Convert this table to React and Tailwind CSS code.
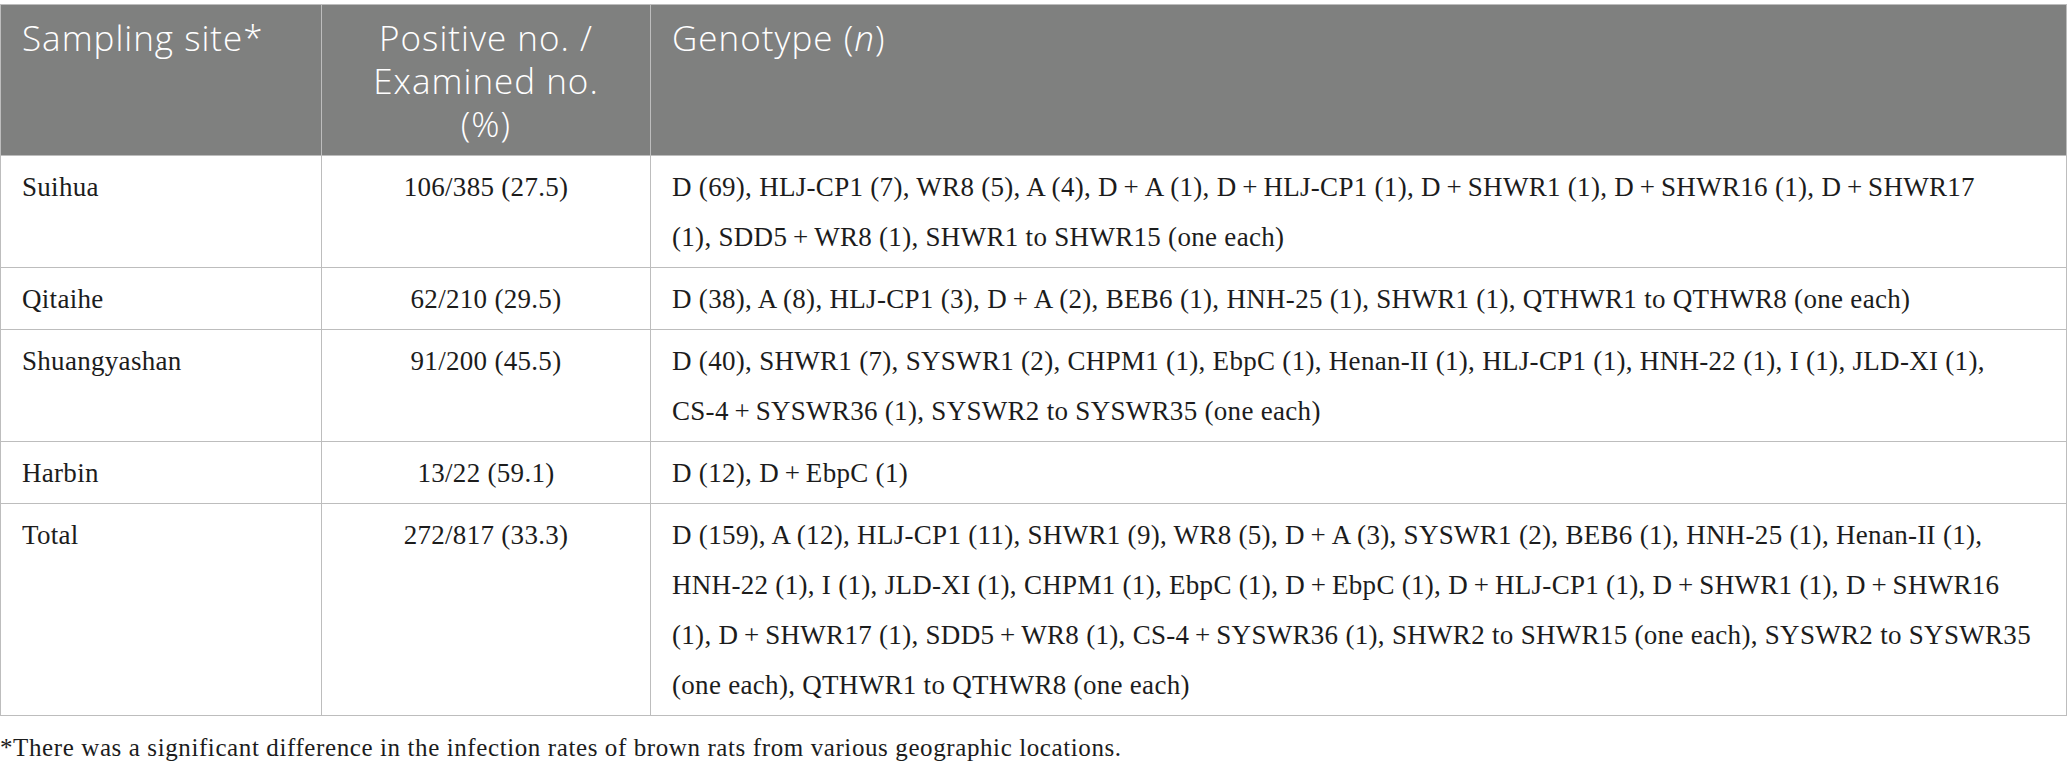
import React from "react";

// genotype lists, broken where the printed table breaks them
const rows = [
  {
    site: "Suihua",
    ratio: "106/385 (27.5)",
    genotype: [
      "D (69), HLJ-CP1 (7), WR8 (5), A (4), D + A (1), D + HLJ-CP1 (1), D + SHWR1 (1), D + SHWR16 (1), D + SHWR17",
      "(1), SDD5 + WR8 (1), SHWR1 to SHWR15 (one each)",
    ],
  },
  {
    site: "Qitaihe",
    ratio: "62/210 (29.5)",
    genotype: [
      "D (38), A (8), HLJ-CP1 (3), D + A (2), BEB6 (1), HNH-25 (1), SHWR1 (1), QTHWR1 to QTHWR8 (one each)",
    ],
  },
  {
    site: "Shuangyashan",
    ratio: "91/200 (45.5)",
    genotype: [
      "D (40), SHWR1 (7), SYSWR1 (2), CHPM1 (1), EbpC (1), Henan-II (1), HLJ-CP1 (1), HNH-22 (1), I (1), JLD-XI (1),",
      "CS-4 + SYSWR36 (1), SYSWR2 to SYSWR35 (one each)",
    ],
  },
  {
    site: "Harbin",
    ratio: "13/22 (59.1)",
    genotype: ["D (12), D + EbpC (1)"],
  },
  {
    site: "Total",
    ratio: "272/817 (33.3)",
    genotype: [
      "D (159), A (12), HLJ-CP1 (11), SHWR1 (9), WR8 (5), D + A (3), SYSWR1 (2), BEB6 (1), HNH-25 (1), Henan-II (1),",
      "HNH-22 (1), I (1), JLD-XI (1), CHPM1 (1), EbpC (1), D + EbpC (1), D + HLJ-CP1 (1), D + SHWR1 (1), D + SHWR16",
      "(1), D + SHWR17 (1), SDD5 + WR8 (1), CS-4 + SYSWR36 (1), SHWR2 to SHWR15 (one each), SYSWR2 to SYSWR35",
      "(one each), QTHWR1 to QTHWR8 (one each)",
    ],
  },
];

const cell = "border border-[#bdbdbd] px-[21px] align-top";

export default function App() {
  return (
    <div className="w-[2067px] bg-white pt-[4px]">
      <table className="w-[2067px] table-fixed border-collapse border border-[#bdbdbd]">
        <colgroup>
          <col className="w-[321px]" />
          <col className="w-[329px]" />
          <col />
        </colgroup>
        <thead>
          <tr className="bg-[#7f807f] text-white font-['Open_Sans',sans-serif] text-[35px] leading-[43px] tracking-[1px]">
            <th className={`${cell} h-[151px] pt-[11px] text-left font-light`}>
              Sampling site*
            </th>
            <th className={`${cell} px-[8px] pt-[11px] text-center font-light`}>
              Positive no. /
              <br />
              Examined no.
              <br />
              (%)
            </th>
            <th className={`${cell} pt-[11px] text-left font-light`}>
              Genotype (<i>n</i>)
            </th>
          </tr>
        </thead>
        <tbody className="font-['Liberation_Serif',serif] text-[27px] leading-[50px] tracking-[0.3px] text-[#1c1c1c]">
          {rows.map((r) => (
            <tr key={r.site}>
              <td className={`${cell} pt-[6px] pb-[5px]`}>{r.site}</td>
              <td className={`${cell} pt-[6px] pb-[5px] text-center`}>{r.ratio}</td>
              <td className={`${cell} pt-[6px] pb-[5px] pr-[12px]`}>
                {r.genotype.map((line) => (
                  <div key={line} className="whitespace-nowrap">
                    {line.replaceAll(" + ", "\u2009+\u2009")}
                  </div>
                ))}
              </td>
            </tr>
          ))}
        </tbody>
      </table>
      <p className="mt-[7px] font-['Liberation_Serif',serif] text-[25px] leading-[50px] tracking-[0.6px] text-[#1c1c1c]">
        *There was a significant difference in the infection rates of brown rats from various geographic locations.
      </p>
    </div>
  );
}
